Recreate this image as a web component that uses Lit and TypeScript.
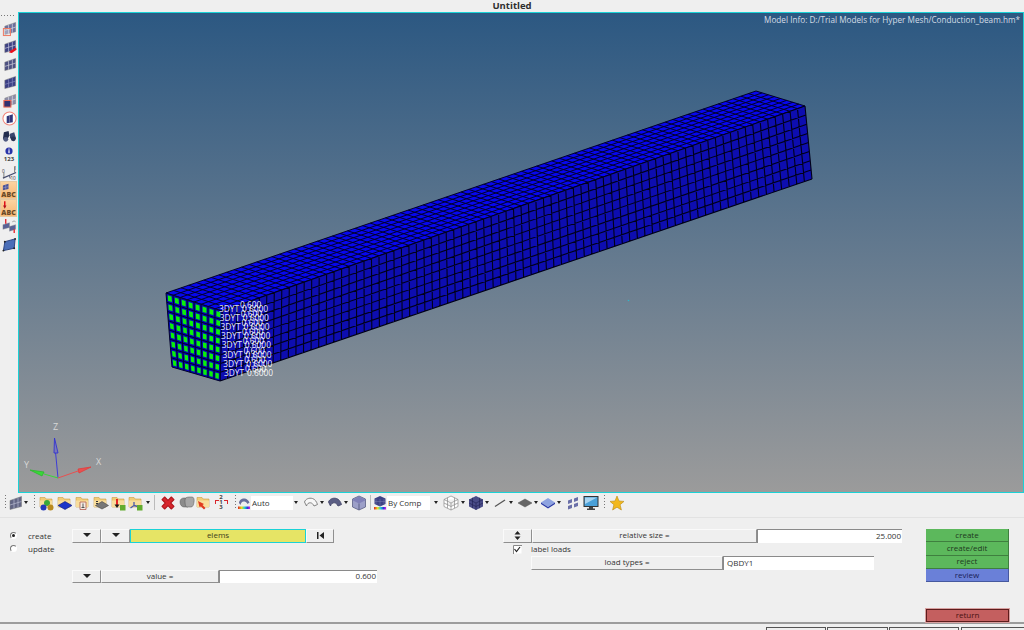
import { LitElement, css, html, svg } from 'lit'
import { customElement } from 'lit/decorators.js'

type P = [number, number]
type Quad = [P, P, P, P]

// corners go a (u0 v0), b (u1 v0), c (u1 v1), d (u0 v1)
const at = (q: Quad, u: number, v: number): P => {
  const tx = q[0][0] + (q[1][0] - q[0][0]) * u
  const ty = q[0][1] + (q[1][1] - q[0][1]) * u
  const bx = q[3][0] + (q[2][0] - q[3][0]) * u
  const by = q[3][1] + (q[2][1] - q[3][1]) * u
  return [tx + (bx - tx) * v, ty + (by - ty) * v]
}

const gridPath = (q: Quad, nu: number, nv: number) => {
  let d = ''
  for (let i = 0; i <= nu; i++) {
    const a = at(q, i / nu, 0)
    const b = at(q, i / nu, 1)
    d += `M${a[0].toFixed(1)} ${a[1].toFixed(1)}L${b[0].toFixed(1)} ${b[1].toFixed(1)}`
  }
  for (let j = 0; j <= nv; j++) {
    const a = at(q, 0, j / nv)
    const b = at(q, 1, j / nv)
    d += `M${a[0].toFixed(1)} ${a[1].toFixed(1)}L${b[0].toFixed(1)} ${b[1].toFixed(1)}`
  }
  return d
}

const pts = (q: P[]) => q.map((p) => p.map((n) => n.toFixed(1)).join(',')).join(' ')

const FRONT: Quad = [[166, 293], [222, 311], [220, 381], [172, 367]]
const TOP: Quad = [[166, 293], [756, 91], [805, 106], [222, 311]]
const SIDE: Quad = [[222, 311], [805, 106], [812, 179], [220, 381]]
const CELLS = 78

const greens = () => {
  const out: string[] = []
  for (let i = 0; i < 8; i++) {
    for (let j = 0; j < 8; j++) {
      const q: Quad = [
        at(FRONT, (i + 0.22) / 8, (j + 0.2) / 8),
        at(FRONT, (i + 0.78) / 8, (j + 0.2) / 8),
        at(FRONT, (i + 0.78) / 8, (j + 0.8) / 8),
        at(FRONT, (i + 0.22) / 8, (j + 0.8) / 8),
      ]
      out.push(pts(q))
    }
  }
  return out
}

const labels = Array.from({ length: 8 }, (_, i) => ({ x: 219 + i * 0.7, y: 312 + i * 9.1 }))

// little icons, all on a 16 box
const ic = (inner: unknown) => html`<svg class="ic" viewBox="0 0 16 16">${inner}</svg>`

const panel = (fill: string, line = '#c9cbe0') => svg`
  <path d="M3 5.5 14.5 1.5V11.5L3 14.5z" fill=${fill} stroke="#777" stroke-width=".5"/>
  <path d="M7 4.2V13.5M11 2.8V12.5M3 10 14.5 6.5" stroke=${line} stroke-width=".7" fill="none"/>`

const folder = (inner: unknown = '') => ic(svg`
  <path d="M1 2.5h5l1.2 1.5H13v8H1z" fill="#f2cc76" stroke="#c99c45" stroke-width=".6"/>
  <path d="M1 5.5h12v6.5H1z" fill="#f8dd9c"/>${inner}`)

const stripIcons = [
  { icon: ic(svg`${panel('#6d6f9d', '#dfe0ea')}<rect x="1.5" y="8" width="7.5" height="7.5" fill="#eee" fill-opacity=".4" stroke="#ee7c66" stroke-width="1.1"/>`) },
  { icon: ic(svg`${panel('#3e4284')}<path d="M15 9 9 12.5l1.5 2.5 5-3.5zM9 12.5l-1.5 2 3 .5z" fill="#e8101c"/>`) },
  { icon: ic(panel('#4d5082', '#d8d8e0')) },
  { icon: ic(panel('#3b3f85', '#8a8cc0')) },
  { icon: ic(svg`${panel('#8c8ca8', '#dfe0ea')}<rect x="2" y="8" width="7.5" height="7" fill="#2d3070" stroke="#ee6a55" stroke-width="1.1"/>`) },
  { icon: ic(svg`<circle cx="8" cy="8" r="7" fill="#fff" stroke="#f0857a" stroke-width="1.1"/><path d="M5 5.5 11.5 3.5V12L5 13z" fill="#30357a"/><path d="M8 4.6V12.5" stroke="#aab" stroke-width=".5"/>`) },
  { icon: ic(svg`<path d="M2 3.5 7 2l1 5-3.5 6L1 10z" fill="#232d4e"/><path d="M8.5 5 13 3.5l2 6.5-2.5 3-4-3.5z" fill="#39466e"/><circle cx="4" cy="11" r="2.6" fill="#4f5a80"/><circle cx="12" cy="10.5" r="2.6" fill="#2a3354"/>`) },
  { icon: html`<div class="num"><svg class="dot" viewBox="0 0 8 8"><circle cx="4" cy="4" r="3.6" fill="#2933a8"/><rect x="3.4" y="3.2" width="1.2" height="3" fill="#fff"/><rect x="3.4" y="1.6" width="1.2" height="1" fill="#fff"/></svg><span>123</span></div>` },
  { icon: ic(svg`<path d="M1 14 15 8" stroke="#454c70" stroke-width="1.3"/><path d="M2 8v6" stroke="#555" stroke-width=".8"/><path d="M13.5 2v6" stroke="#555" stroke-width=".8"/><path d="M8 11.5l.8 3" stroke="#454c70"/><text x="0" y="8" class="tiny">0</text><text x="12.5" y="5" class="tiny">1</text><text x="9" y="16" class="tiny">10</text>`) },
  { active: true, icon: html`<div class="abc"><svg class="abc-top" viewBox="0 0 16 8"><path d="M2 2.5 8 .5V6L2 7.5z" fill="#4a5298"/><path d="M5 1.5v5.5M2 5l6-1.5" stroke="#b9bbd8" stroke-width=".4"/></svg><span>ABC</span></div>` },
  { active: true, icon: html`<div class="abc"><svg class="abc-top" viewBox="0 0 16 8"><path d="M4 0v5" stroke="#e2101a" stroke-width="1.6"/><path d="M2.2 4.5h3.6L4 8z" fill="#b0101a"/></svg><span>ABC</span></div>` },
  { icon: ic(svg`<path d="M1 6 8 4V9L1 11zM8 8 14.5 6v5L8 13z" fill="#5a6296" stroke="#888" stroke-width=".4"/><path d="M4 0v5" stroke="#e2101a" stroke-width="1.3"/><path d="M13 11v4" stroke="#e2101a" stroke-width="1.3"/><path d="M11 3c1.5-1 2.5-1 3.5 0" stroke="#999" fill="none"/>`) },
  { icon: ic(svg`<path d="M3 5 14 2 13 12 1.500 14.500z" fill="#4a6eb8" stroke="#27407e"/><circle cx="3" cy="5" r="1" fill="#222"/><circle cx="14" cy="2" r="1" fill="#222"/><circle cx="13" cy="12" r="1" fill="#222"/><circle cx="1.500" cy="14.500" r="1" fill="#222"/>`) },
]

const dots = html`<span class="dots"></span>`
const arr = html`<span class="arr"></span>`
const sep = html`<span class="sep"></span>`

const cubeTop = svg`<path d="M8 1.500 15 5 8 8.500 1 5z" fill="#8080b8"/>`
const surface = (fill: string, stroke: string) => svg`<path d="M1.500 7c1-3 4.500-4.500 8-3.500 2.500.8 4 3 5 6l-3.500 1.500c-1-2-2-3-3.500-3.200C5.500 7.500 4 9 3.500 11z" fill=${fill} stroke=${stroke} stroke-width=".9"/>`

// [slot width, content], running left to right from x = 3
const tools: [number, unknown][] = [
  [4, dots],
  [15, ic(panel('#626584', '#b9bbd0'))],
  [8, arr],
  [8, dots],
  [18, folder(svg`<circle cx="8" cy="8" r="3" fill="#3aa83a"/><circle cx="4.500" cy="12.500" r="3" fill="#2438b8"/><circle cx="11.500" cy="12.500" r="3" fill="#b98a20"/>`)],
  [18, folder(svg`<path d="M8 6.500 15 10.500 8 14.500 1 10.500z" fill="#1d36c8" stroke="#0e1a78" stroke-width=".6"/>`)],
  [18, folder(svg`<path d="M5 7h6v7.500H5z" fill="#f5ece4" stroke="#b05a4a" stroke-width=".8"/><path d="M8 8.500v4M6.500 12.500h3" stroke="#555"/>`)],
  [18, folder(svg`<path d="M3 6.500h2M3 8.500h2" stroke="#333"/><path d="M9 6.500 15.500 10.500 9 14 2.500 10.500z" fill="#777" stroke="#444" stroke-width=".6"/>`)],
  [18, folder(svg`<path d="M6 4v6" stroke="#e2101a" stroke-width="1.8"/><path d="M3.500 9.500h5L6 13z" fill="#1a1a1a"/><rect x="9" y="10" width="5.500" height="5.500" fill="#62ac2e"/>`)],
  [16, folder(svg`<path d="M6 7v3.500L2.500 13M6 10.500l4 1" stroke="#4a5aa8" stroke-width="1.3" fill="none"/><rect x="9" y="10" width="5.500" height="5.500" fill="#62ac2e"/>`)],
  [8, arr],
  [4, sep],
  [6, ''],
  [12, html`<svg class="ic" viewBox="0 0 12 12"><path d="M1.500 3.500 3.500 1.500 6 4 8.500 1.500 10.500 3.500 8 6 10.500 8.500 8.500 10.500 6 8 3.500 10.500 1.500 8.500 4 6z" fill="#d8262c" stroke="#b01820" stroke-width=".8" stroke-linejoin="round"/></svg>`],
  [4, ''],
  [17, ic(svg`<path d="M1 7c0-3 2-4 4-4h5l-1 9H5c-2 0-4-2-4-5z" fill="#8b8b8b" stroke="#555" stroke-width=".5"/><path d="M6 5c0-2 2-3 4-3h3c2 0 2.500 3 2 5-.4 2.500-1 5-3 5H8c-2 0-2-5-2-7z" fill="#a6a6a6" stroke="#555" stroke-width=".5"/>`)],
  [1, ''],
  [16, folder(svg`<path d="M2 6l6 3-1.500 1 3 3-1.500 1.500-3-3L3.500 12z" fill="#e03a20"/>`)],
  [2, ''],
  [14, html`<div class="order"><i>2</i><b class="l"></b><i>1</i><b class="r"></b><i>3</i></div>`],
  [4, ''],
  [6, dots],
  [55, html`<div class="combo"><svg class="ci" viewBox="0 0 12 14"><path d="M1 7c0-3 3-5 6-4.500 2 .4 3.500 2 4.500 4L9.500 8C8.500 6 7 5.500 5.500 5.500 4 5.500 3 7 2.500 9z" fill="#6a6f9c"/><rect x="0" y="10.500" width="12" height="2.500" fill="url(#rb)"/></svg><span>Auto</span></div>`],
  [5, arr],
  [5, ''],
  [15, ic(surface('#f7f7f7', '#777'))],
  [8, arr],
  [1, ''],
  [15, ic(surface('#5b5e84', '#44466a'))],
  [8, arr],
  [2, ''],
  [14, ic(svg`<path d="M8 1 14.500 4v8L8 15 1.500 12V4z" fill="#9c9fc8" stroke="#5b5e84" stroke-width=".8"/>${cubeTop}<path d="M8 8.500V15" stroke="#5b5e84"/>`)],
  [1, ''],
  [7, sep],
  [56, html`<div class="combo"><svg class="ci" viewBox="0 0 12 14"><path d="M6 0 11.500 2.500V8L6 10.500.5 8V2.500z" fill="#3e4285"/><path d="M2 3v5M6 3v7M10 3v5M1 5.500h10" stroke="#7a7db0" stroke-width=".5"/><rect x="0" y="11" width="12" height="2.500" fill="url(#rb)"/></svg><span>By Comp</span></div>`],
  [12, arr],
  [1, ''],
  [15, ic(svg`<path d="M8 1 15 4.500v7L8 15 1 11.500v-7zM1 4.500 8 8l7-3.500M8 8v7M4.500 2.700v10.500M11.500 2.700v10.500M1 8l7 3.500L15 8" fill="#fff" stroke="#8a8a8a" stroke-width=".7"/>`)],
  [9, arr],
  [1, ''],
  [15, ic(svg`<path d="M8 1 15 4.500v7L8 15 1 11.500v-7z" fill="#4a4c88"/><path d="M1 4.500 8 8l7-3.500M8 8v7M4.500 2.700v10.500M11.500 2.700v10.500M1 8l7 3.500L15 8" fill="none" stroke="#1f2050" stroke-width=".6"/>`)],
  [7, arr],
  [3, ''],
  [14, ic(svg`<path d="M3 11.500 13 5" stroke="#555" stroke-width="1.300"/>`)],
  [8, arr],
  [2, ''],
  [15, ic(svg`<path d="M8 4 15 8l-7 4-7-4z" fill="#666" stroke="#555" stroke-width=".5"/>`)],
  [7, arr],
  [2, ''],
  [14, ic(svg`<path d="M8 3 15 7.500 8 12 1 7.500z" fill="#8ea3e0"/><path d="M1 7.500V9L8 13.500 15 9V7.500L8 12z" fill="#2a3aa8"/>`)],
  [8, arr],
  [4, ''],
  [12, ic(svg`<path d="M3 5.500l4-1.500v3.500L3 9zM9 3.500l4-1.500v3.500L9 7zM3 11l4-1.500V13L3 14.500zM9 9l4-1.500V11L9 12.500z" fill="#6a6fa8"/>`)],
  [4, ''],
  [15, ic(svg`<rect x="1" y="1.500" width="14" height="10" fill="#4aa0d8" stroke="#333" stroke-width="1"/><path d="M2 2.500h12L2 9z" fill="#a8d4f0"/><path d="M6 12h4v1.500h2V15H4v-1.500h2z" fill="#444"/>`)],
  [3, ''],
  [6, dots],
  [3, ''],
  [13, ic(svg`<path d="M8 1 10 6l5 .4-3.900 3.300L12.400 15 8 12.200 3.600 15l1.300-5.300L1 6.400 6 6z" fill="#f2b81c" stroke="#b98a14" stroke-width=".6"/>`)],
]

@customElement('app-root')
export class AppRoot extends LitElement {
  static styles = css`
    :host {
      display: block;
      width: 1024px;
      height: 630px;
      overflow: hidden;
      background: #efefef;
      color: #333;
      font-family: 'Open Sans', sans-serif;
      font-size: 8px;
    }
    * { box-sizing: border-box; }

    .title {
      height: 12px;
      line-height: 11px;
      text-align: center;
      font-weight: 700;
      font-size: 9.5px;
      color: #2e2e2e;
    }

    .mid { display: flex; height: 481px; }

    .strip { width: 18px; flex: none; padding-top: 7px; position: relative; }
    .strip .top-dots {
      position: absolute;
      left: 1px;
      top: 3px;
      width: 14px;
      height: 1px;
      background: repeating-linear-gradient(90deg, #777 0 1px, transparent 1px 3px);
    }
    .slot { height: 18px; display: flex; align-items: center; justify-content: center; }
    .slot.active {
      margin: 0 1px 0 0;
      background: linear-gradient(#fbd3a0, #f8b774);
      border: 1px solid #e6c8a0;
    }
    .ic { width: 15px; height: 15px; display: block; overflow: visible; flex: none; }
    .tool .ic { width: 16px; height: 16px; }
    .tiny { font-size: 5px; fill: #333; }
    .num { display: flex; flex-direction: column; align-items: center; line-height: 6px; font-size: 6px; font-weight: 700; color: #444; }
    .dot { width: 8px; height: 8px; margin-bottom: 1px; }
    .abc { display: flex; flex-direction: column; align-items: center; line-height: 6px; font-size: 7px; font-weight: 800; color: #6a4a28; }
    .abc-top { width: 15px; height: 8px; margin-bottom: 1px; }

    .view { flex: 1; border: 1px solid #1ad2d6; min-width: 0; }
    .view svg { display: block; width: 100%; height: 100%; }
    .info { font-size: 8.2px; fill: #d4dce6; }
    .lab { font-size: 8.4px; fill: #fff; fill-opacity: .92; }
    .axis { font-size: 9px; fill: #d8d8d8; }
    /* soft lines, so the grid doesn't beat against the pixels */
    .mesh { filter: blur(0.5px); }

    .toolbar {
      height: 25px;
      padding: 0 0 5px 3px;
      display: flex;
      align-items: center;
      border-bottom: 1px solid #e2e2e2;
    }
    .tool { flex: none; display: flex; align-items: center; justify-content: center; height: 18px; }
    .dots {
      width: 1px;
      height: 15px;
      background: repeating-linear-gradient(#777 0 1px, transparent 1px 3px);
    }
    .arr {
      width: 0;
      height: 0;
      border-left: 2.5px solid transparent;
      border-right: 2.5px solid transparent;
      border-top: 3px solid #222;
    }
    .sep { width: 1px; height: 15px; background: #bbb; }
    .combo {
      width: 100%;
      height: 14px;
      display: flex;
      align-items: center;
      gap: 1px;
    }
    .combo span { flex: 1; height: 100%; background: #fff; padding-left: 1px; line-height: 14px; }
    .ci { width: 12px; height: 14px; flex: none; }
    .order { display: grid; grid-template-columns: 4px 5px 4px; grid-template-rows: 5px 5px 5px; font-size: 6px; line-height: 5px; font-weight: 700; text-align: center; color: #444; }
    .order i { font-style: normal; grid-column: 2; }
    .order b { width: 4px; height: 4px; border-top: 1px solid #d8262c; grid-row: 2; }
    .order b.l { grid-column: 1; border-left: 1px solid #d8262c; }
    .order b.r { grid-column: 3; border-right: 1px solid #d8262c; }

    .panel {
      height: 106px;
      padding-top: 11px;
      display: flex;
      border-bottom: 2px solid #9c9c9c;
    }
    .radios { width: 72px; padding-left: 10px; flex: none; }
    .col-b { width: 431px; flex: none; }
    .col-c { width: 423px; flex: none; }
    .col-d { width: 83px; flex: none; display: flex; flex-direction: column; }

    .row { height: 13.5px; display: flex; align-items: stretch; }
    .radio-row { height: 13.5px; display: flex; align-items: center; gap: 11px; padding-bottom: 1px; }
    .radio {
      width: 7px;
      height: 7px;
      border-radius: 50%;
      background: #fff;
      border: 1px solid transparent;
      border-top-color: #777;
      border-left-color: #777;
      display: flex;
      align-items: center;
      justify-content: center;
    }
    .radio.on::after { content: ''; width: 3px; height: 3px; border-radius: 50%; background: #222; }

    .btn {
      flex: none;
      display: flex;
      align-items: center;
      justify-content: center;
      padding-bottom: 1px;
      background: #efefef;
      border-right: 1px solid #8f8f8f;
      border-bottom: 1px solid #8f8f8f;
      border-top: 1px solid #fafafa;
      border-left: 1px solid #fafafa;
      line-height: 1;
    }
    .tri { width: 0; height: 0; border-left: 4px solid transparent; border-right: 4px solid transparent; border-top: 4px solid #222; }
    .w28 { width: 29px; }
    .w27 { width: 28px; }
    .w117 { width: 118px; }
    .w226 { width: 225px; }
    .w192 { width: 192px; }
    .offset { margin-left: 28px; }
    .field {
      flex: none;
      background: #fff;
      border-top: 1px solid #8a8a8a;
      border-left: 1px solid #8a8a8a;
      display: flex;
      align-items: center;
      padding: 0 1px 1px 3px;
      line-height: 1;
    }
    .num-f { justify-content: flex-end; }
    .w157 { width: 158px; }
    .w146 { width: 145px; }
    .w151 { width: 151px; }
    .yellow {
      flex: none;
      width: 176px;
      background: #e6e465;
      border: 1px solid #1ad2d6;
      display: flex;
      align-items: center;
      justify-content: center;
      padding-bottom: 1px;
      color: #3f4020;
      line-height: 1;
    }
    .first { width: 14px; height: 9px; }
    .updown { width: 7px; height: 9px; }
    .check { flex: none; margin: 0 9px 0 10px; width: 9px; height: 9px; align-self: center; }
    .label-load { align-self: center; line-height: 1; padding-bottom: 1px; }

    .act {
      height: 13.5px;
      display: flex;
      align-items: center;
      justify-content: center;
      padding-bottom: 1px;
      border-right: 1px solid #3f7f3f;
      border-bottom: 1px solid #3f7f3f;
      background: #5cb85c;
      color: #1e3a1e;
      line-height: 1;
    }
    .act.blue { background: #6a80d8; border-color: #46589e; color: #1a2258; }
    .act.red {
      margin-top: 27px;
      height: 13px;
      background: #c45f5f;
      border: 1px solid #5e1c1c;
      outline: 1px solid #d8a0a0;
      color: #4a1212;
    }

    .status { height: 6px; display: flex; padding-top: 3px; padding-left: 766px; gap: 1px; }
    .seg { flex: none; border: 1px solid #555; border-bottom: none; height: 4px; }
    .s60 { width: 60px; }
    .s61 { width: 61px; }
    .s70 { width: 70px; margin-right: 1px; }
    .s64 { width: 64px; }
  `

  render() {
    const green = greens()
    return html`
      <div class="title">Untitled</div>
      <div class="mid">
        <div class="strip">
          <div class="top-dots"></div>
          ${stripIcons.map((s) => html`<div class="slot ${s.active ? 'active' : ''}">${s.icon}</div>`)}
        </div>
        <div class="view">
          <svg viewBox="19 13 1004 479" preserveAspectRatio="none">
            <defs>
              <linearGradient id="sky" x1="0" y1="0" x2="0" y2="1">
                <stop offset="0" stop-color="#2c5882"></stop>
                <stop offset="1" stop-color="#9b9b9b"></stop>
              </linearGradient>
            </defs>
            <rect x="19" y="13" width="1004" height="479" fill="url(#sky)"></rect>
            <text class="info" x="1020" y="23" text-anchor="end">Model Info: D:/Trial Models for Hyper Mesh/Conduction_beam.hm*</text>

            <g class="mesh">
              <polygon points=${pts(TOP)} fill="#0707ee"></polygon>
              <path d=${gridPath(TOP, CELLS, 8)} stroke="#02022a" stroke-width="1" fill="none"></path>
              <polygon points=${pts(SIDE)} fill="#0d0db0"></polygon>
              <path d=${gridPath(SIDE, CELLS, 8)} stroke="#010118" stroke-width="1.1" fill="none"></path>
              <polygon points=${pts(FRONT)} fill="#0505b8"></polygon>
              ${green.map((p) => svg`<polygon points=${p} fill="#0af00a"></polygon>`)}
              <path d=${gridPath(FRONT, 8, 8)} stroke="#02022a" stroke-width="1" fill="none"></path>
            </g>

            ${labels.map((l) => svg`
              <text class="lab" x=${l.x} y=${l.y}>3DYT</text>
              <text class="lab" x=${l.x + 21} y=${l.y - 4}>0.600</text>
              <text class="lab" x=${l.x + 23} y=${l.y}>0.6000</text>`)}

            <circle cx="628.500" cy="300.500" r=".8" fill="#2fb7c8"></circle>

            <path d="M58 478 55.500 452" stroke="#3c3cd8" stroke-width="1"></path>
            <path d="M54.500 438 58 453 54 453z" fill="#7a7ab8" stroke="#3232d0" stroke-width=".9"></path>
            <path d="M58 478 44 474" stroke="#38d838" stroke-width="1"></path>
            <path d="M30 470 44 472 42 476z" fill="#38d838" stroke="#2cb82c" stroke-width=".8"></path>
            <path d="M58 478 78 471" stroke="#e85050" stroke-width="1"></path>
            <path d="M91 467 78 469 79 473z" fill="#e85050" stroke="#e03c3c" stroke-width=".8"></path>
            <text class="axis" x="53" y="430">Z</text>
            <text class="axis" x="24" y="468">Y</text>
            <text class="axis" x="96" y="465">X</text>
          </svg>
        </div>
      </div>

      <svg width="0" height="0" style="position:absolute">
        <defs>
          <linearGradient id="rb" x1="0" y1="0" x2="1" y2="0">
            <stop offset="0" stop-color="#e02020"></stop>
            <stop offset=".3" stop-color="#e8e020"></stop>
            <stop offset=".55" stop-color="#20d0d0"></stop>
            <stop offset=".8" stop-color="#3030e0"></stop>
            <stop offset="1" stop-color="#e020e0"></stop>
          </linearGradient>
        </defs>
      </svg>

      <div class="toolbar">
        ${tools.map(([w, c]) => html`<div class="tool" style="width:${w}px">${c}</div>`)}
      </div>

      <div class="panel">
        <div class="radios">
          <div class="radio-row"><span class="radio on"></span><span>create</span></div>
          <div class="radio-row"><span class="radio"></span><span>update</span></div>
        </div>
        <div class="col-b">
          <div class="row">
            <div class="btn w28"><span class="tri"></span></div>
            <div class="btn w28"><span class="tri"></span></div>
            <div class="yellow">elems</div>
            <div class="btn w27">
              <svg class="first" viewBox="0 0 14 9"><path d="M4 1h1.500v7H4zM11 1v7L6.500 4.500z" fill="#222"></path></svg>
            </div>
          </div>
          <div class="row"></div>
          <div class="row"></div>
          <div class="row">
            <div class="btn w28"><span class="tri"></span></div>
            <div class="btn w117">value =</div>
            <div class="field num-f w157">0.600</div>
          </div>
        </div>
        <div class="col-c">
          <div class="row">
            <div class="btn w28">
              <svg class="updown" viewBox="0 0 7 9"><path d="M3.500 0 6.500 3.500H.5zM3.500 9 .5 5.500h6z" fill="#222"></path></svg>
            </div>
            <div class="btn w226">relative size =</div>
            <div class="field num-f w146">25.000</div>
          </div>
          <div class="row">
            <svg class="check" viewBox="0 0 9 9">
              <rect x=".5" y=".5" width="8" height="8" fill="#fff"></rect>
              <path d="M.5 9V.5H9" stroke="#888" fill="none"></path>
              <path d="M1.500 4 3.500 6.500 7 2" stroke="#222" stroke-width="1.200" fill="none"></path>
            </svg>
            <span class="label-load">label loads</span>
          </div>
          <div class="row">
            <div class="btn w192 offset">load types =</div>
            <div class="field w151">QBDY1</div>
          </div>
        </div>
        <div class="col-d">
          <div class="act">create</div>
          <div class="act">create/edit</div>
          <div class="act">reject</div>
          <div class="act blue">review</div>
          <div class="act red">return</div>
        </div>
      </div>

      <div class="status">
        <div class="seg s60"></div>
        <div class="seg s61"></div>
        <div class="seg s70"></div>
        <div class="seg s64"></div>
      </div>
    `
  }
}
